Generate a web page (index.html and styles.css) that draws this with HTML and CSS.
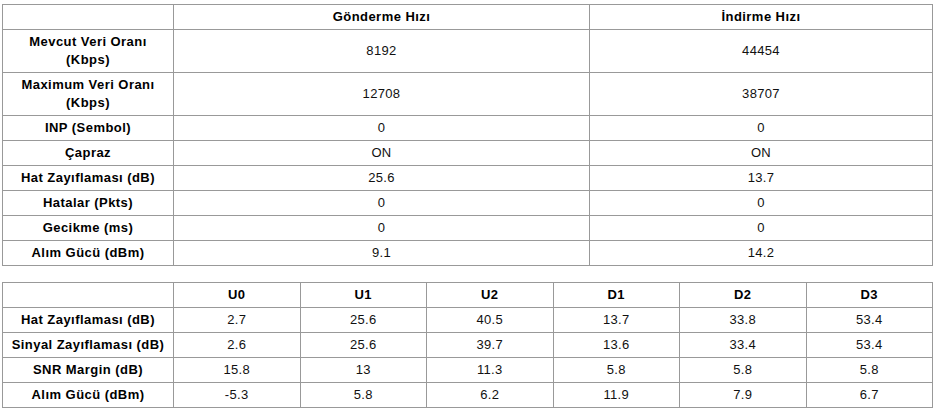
FILE: index.html
```html
<!DOCTYPE html>
<html lang="tr">
<head>
<meta charset="utf-8">
<title>DSL</title>
<link rel="stylesheet" href="styles.css">
</head>
<body>
<table class="grid main">
  <colgroup><col class="c-label"><col class="c-up"><col></colgroup>
  <tr><th></th><th>Gönderme Hızı</th><th>İndirme Hızı</th></tr>
  <tr><th>Mevcut Veri Oranı<br>(Kbps)</th><td>8192</td><td>44454</td></tr>
  <tr><th>Maximum Veri Oranı<br>(Kbps)</th><td>12708</td><td>38707</td></tr>
  <tr><th>INP (Sembol)</th><td>0</td><td>0</td></tr>
  <tr><th>Çapraz</th><td>ON</td><td>ON</td></tr>
  <tr><th>Hat Zayıflaması (dB)</th><td>25.6</td><td>13.7</td></tr>
  <tr><th>Hatalar (Pkts)</th><td>0</td><td>0</td></tr>
  <tr><th>Gecikme (ms)</th><td>0</td><td>0</td></tr>
  <tr><th>Alım Gücü (dBm)</th><td>9.1</td><td>14.2</td></tr>
</table>
<table class="grid bands">
  <colgroup><col class="c-label"><col span="6"></colgroup>
  <tr><th></th><th>U0</th><th>U1</th><th>U2</th><th>D1</th><th>D2</th><th>D3</th></tr>
  <tr><th>Hat Zayıflaması (dB)</th><td>2.7</td><td>25.6</td><td>40.5</td><td>13.7</td><td>33.8</td><td>53.4</td></tr>
  <tr><th>Sinyal Zayıflaması (dB)</th><td>2.6</td><td>25.6</td><td>39.7</td><td>13.6</td><td>33.4</td><td>53.4</td></tr>
  <tr><th>SNR Margin (dB)</th><td>15.8</td><td>13</td><td>11.3</td><td>5.8</td><td>5.8</td><td>5.8</td></tr>
  <tr><th>Alım Gücü (dBm)</th><td>-5.3</td><td>5.8</td><td>6.2</td><td>11.9</td><td>7.9</td><td>6.7</td></tr>
</table>
</body>
</html>
```
FILE: styles.css
```css
html, body {
  background: #fff;
}
body {
  margin: 4px 2px;
  font-family: "Liberation Sans", Arial, sans-serif;
  font-size: 13px;
  color: #000;
}
.grid {
  border-collapse: collapse;
  table-layout: fixed;
  width: 931px;
}
.grid th,
.grid td {
  border: 1px solid #999;
  padding: 3px 0;
  line-height: 18px;
  text-align: center;
  vertical-align: middle;
}
.grid th {
  font-weight: bold;
  color: #000;
  letter-spacing: 0.45px;
}
.grid td {
  color: #111;
  letter-spacing: 0.35px;
}
.c-label {
  width: 171px;
}
.c-up {
  width: 416px;
}
.main {
  margin-bottom: 16px;
}
```
